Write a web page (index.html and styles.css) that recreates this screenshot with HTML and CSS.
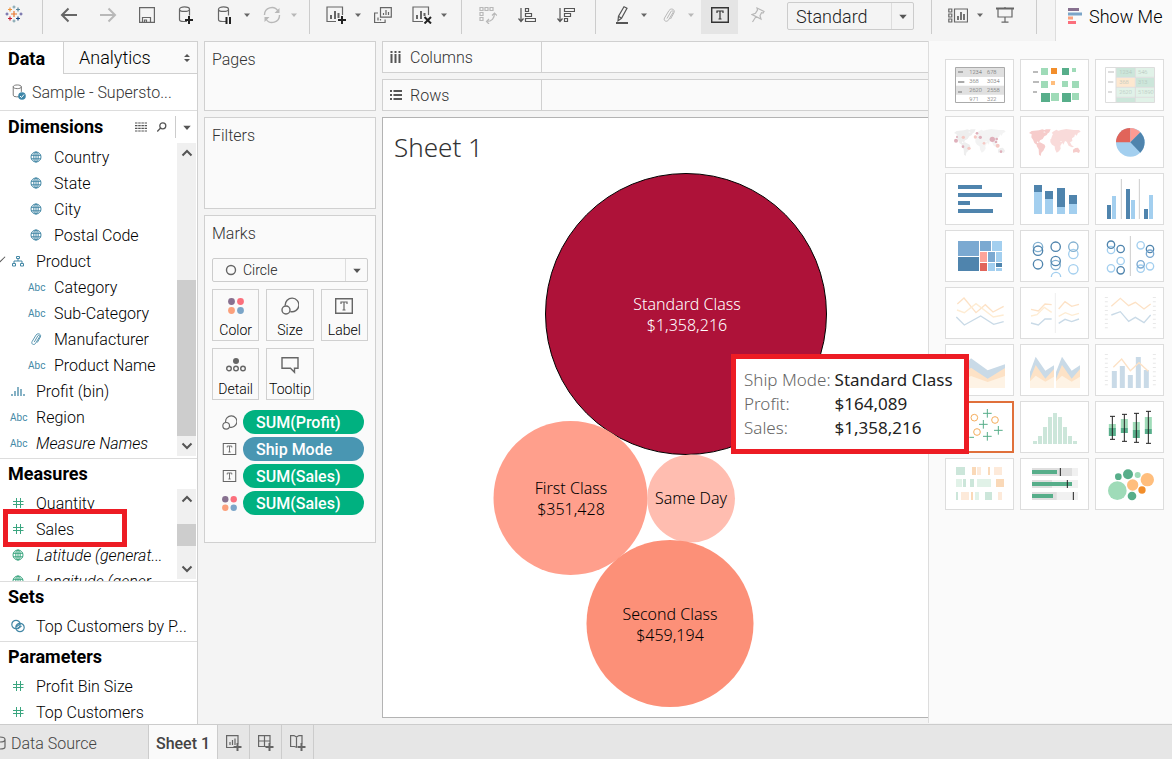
FILE: index.html
```html
<!DOCTYPE html>
<html lang="en">
<head>
<meta charset="utf-8">
<title>Sheet 1</title>
<link rel="stylesheet" href="styles.css">
</head>
<body>
<svg class="defs" aria-hidden="true">
<symbol id="globe" viewBox="0 0 12 12"><g fill="none" stroke="currentColor"><circle cx="6" cy="6" r="5"/><ellipse cx="6" cy="6" rx="2.2" ry="5"/><path d="M1 4.3h10M1 7.8h10M6 1v10"/></g></symbol>
<symbol id="hash" viewBox="0 0 12 12"><path d="M4.5 1v10M8.5 1v10M1 4.5h10.500M1 7.500h10.500" fill="none" stroke="currentColor"/></symbol>
<symbol id="clip" viewBox="0 0 14 16"><path d="M5 11.500l4-7c1-1.500 2.800-.5 2 1l-4.500 7.500c-1.500 2.500-5.500 1-4-2l4.500-7.500c2-3 6.500-1 5 2.200l-3.500 6.300" fill="none" stroke="currentColor"/></symbol>
<symbol id="tree" viewBox="0 0 12 12"><path d="M4.500 1.500h3v2h-3zM.5 8.500h3v2.500h-3zM8.500 8.500h3v2.500h-3zM6 3.500v2.500M2 8.500v-2.500h8v2.500" fill="none" stroke="currentColor"/></symbol>
<symbol id="bins" viewBox="0 0 14 12"><path d="M1 9v2M4 6v5M7 2v9M10 4v7M13 9v2" fill="none" stroke="currentColor" stroke-width="1.300"/></symbol>
<symbol id="caret" viewBox="0 0 6 4"><path d="M0 .5h6l-3 3.500z" fill="currentColor"/></symbol>
<symbol id="up" viewBox="0 0 12 8"><path d="M1.500 6.500l4.500-4.500 4.500 4.500" fill="none" stroke="#555" stroke-width="2"/></symbol>
<symbol id="down" viewBox="0 0 12 8"><path d="M1.500 1.500l4.500 4.500 4.500-4.500" fill="none" stroke="#555" stroke-width="2"/></symbol>
<symbol id="boxt" viewBox="0 0 18 16"><path d="M.7.7h16.600v14.600h-16.600z" fill="none" stroke="currentColor" stroke-width="1.400"/><path d="M6 6v-2h6v2M9 4v8M7.500 12h3" fill="none" stroke="currentColor" stroke-width="1.200"/></symbol>
<symbol id="size" viewBox="0 0 18 18"><g fill="none" stroke="currentColor" stroke-width="1.400"><path d="M4.300 8.500a6.800 6.800 0 1 1 5 6"/><circle cx="5" cy="13" r="4"/></g></symbol>
<symbol id="dots" viewBox="0 0 16 16"><circle cx="3.500" cy="3.500" r="3.400" fill="#87708f"/><circle cx="12.500" cy="3.500" r="3.400" fill="#fb6f7c"/><circle cx="3.500" cy="12.500" r="3.400" fill="#fba07c"/><circle cx="12.500" cy="12.500" r="3.400" fill="#7ba5c8"/></symbol>
<symbol id="cyl" viewBox="0 0 16 18"><path d="M9 15.500h-3.500q-4 0-4-2v-10.500M11.500 3v6.500M1.500 3.200c0-3 10-3 10 0s-10 3-10 0" fill="none" stroke="currentColor" stroke-width="1.200"/></symbol>
<symbol id="world" viewBox="0 0 201 150" fill="currentColor"><path d="M24 48l8-6 22-2 10-3 8 3-5 6 8 1 4 6-9 5-5 8-8 4-3 7-6-4 0 6 8 6-4 2-12-9-4-10-5-7 1-9zM67 41l8-4 14 0-4 9-8 6-4-6zM48 78l9-2 14 7 2 6-6 12-6 6-2 10-5-4-1-16-6-10z"/><path fill-opacity=".7" d="M93 57l3-6-4-3 4-4 10-6 6 3 8-2 16-3 22 3 16 0 5 5-8 4-4 8-5-4-2 7-7 5 1 8-7 4 5 9 7 4-6 2-10-5-6-12-5-2-5 11-6-11-7-1 4 6-6 3-5-8-7-4-6 0-5 2zM88 67l8-4 10 1 8 2 5 8 6 1-7 12 1 8-5 8-7 4-5-10-1-9-8-5-5-8z"/><path d="M156 98l7-5 8-1 6 9-3 7-8-3-10 2z"/></symbol>
</svg>

<div class="app">
<header class="toolbar">
<button class="logo" aria-label="Start page"><svg width="18" height="18" viewBox="0 0 18 18" fill="none" stroke-width="1.200"><path d="M9 6v6M6 9h6" stroke="#e8762d"/><path d="M5 2.500v4M3 4.500h4" stroke="#f0943a"/><path d="M13 2.500v4M11 4.500h4" stroke="#5b879b"/><path d="M5 11.500v4M3 13.500h4" stroke="#c72035"/><path d="M13 11.500v4M11 13.500h4" stroke="#1f457e"/><path d="M9 .5v3M7.500 2h3M9 14.500v3M7.500 16h3" stroke="#7099a6" stroke-width="1"/><path d="M2 7.500v3M.5 9h3M16 7.500v3M14.500 9h3" stroke="#59559a" stroke-width="1"/></svg></button>
<span class="sep"></span>
<button class="tool" aria-label="Undo"><svg width="18" height="16" fill="none" stroke="#666" stroke-width="2"><path d="M17 8h-15M8.500 1.500l-6.500 6.500 6.500 6.500"/></svg></button>
<button class="tool" aria-label="Redo"><svg width="18" height="16" fill="none" stroke="#b8b8b8" stroke-width="2"><path d="M1 8h15M9.500 1.500l6.500 6.500-6.500 6.500"/></svg></button>
<button class="tool" aria-label="Save"><svg width="16" height="16" fill="none" stroke="#666" stroke-width="1.200"><path d="M.6.6h14.800v14.800h-14.800zM3.500 15v-4.500h8v4.500M5.500 15v-2h2v2"/></svg></button>
<button class="tool" aria-label="New data source"><svg width="16" height="18"><use href="#cyl" width="16" height="18"/><path d="M11 10v8M7 14h8" stroke="#222" stroke-width="2"/></svg></button>
<button class="tool" aria-label="Pause updates"><svg width="16" height="18"><use href="#cyl" width="16" height="18"/><path d="M9.500 11v7M13 11v7" stroke="#222" stroke-width="2"/></svg></button>
<button class="drop" aria-label="Update options"><svg width="6" height="4"><use href="#caret"/></svg></button>
<button class="tool off" aria-label="Refresh"><svg width="18" height="18" fill="none" stroke="currentColor" stroke-width="1.400"><path d="M1.500 9a7.300 7.300 0 0 1 13.500-4M16.500 9a7.300 7.300 0 0 1-13.500 4"/><path d="M16.500 2v5h-5zM1.500 16v-5h5z" fill="currentColor" stroke="none"/></svg></button>
<button class="drop off" aria-label="Refresh options"><svg width="6" height="4"><use href="#caret"/></svg></button>
<span class="sep"></span>
<button class="tool" aria-label="New worksheet"><svg width="20" height="18" fill="none" stroke="#666" stroke-width="1.200"><path d="M10 15.500h-9v-14.500h15.500v8"/><path d="M5 9v4M9 5v8M12.500 7v5" stroke-width="2"/><path d="M16 10v8M12 14h8" stroke="#222" stroke-width="2"/></svg></button>
<button class="drop" aria-label="New sheet options"><svg width="6" height="4"><use href="#caret"/></svg></button>
<button class="tool" aria-label="Duplicate"><svg width="18" height="17" fill="none" stroke="#666" stroke-width="1.200"><path d="M6.500.6h10.800v9.500h-10.800zM4 6h-3.400v9.500h10.500v-3M9.500 6v2M12 3v5M14.500 5v3M4 10.500v3M6.500 12v1.500"/></svg></button>
<button class="tool" aria-label="Clear sheet"><svg width="20" height="18" fill="none" stroke="#666" stroke-width="1.200"><path d="M11 15.500h-10v-14.500h15.500v8"/><path d="M5 9v4M9 5v8M12.500 7v3" stroke-width="2"/><path d="M12.500 11l6.500 6.500M19 11l-6.500 6.500" stroke="#222" stroke-width="2"/></svg></button>
<button class="drop" aria-label="Clear options"><svg width="6" height="4"><use href="#caret"/></svg></button>
<span class="sep late"></span>
<button class="tool off" aria-label="Swap"><svg width="18" height="18" fill="none" stroke="currentColor" stroke-width="1.200"><path d="M1 1.500h3v3h-3zM6 1.500h3v3h-3zM11 1.500h3v3h-3zM1 6.500h3v3h-3zM1 11.500h3v3h-3zM15.500 7q0 8.500-8 8.500M13 9.500l2.500-2.500 2.500 2.500M10 13l-2.500 2.500 2.500 2.500"/></svg></button>
<button class="tool" aria-label="Sort ascending"><svg width="18" height="16" fill="none" stroke="#555" stroke-width="1.200"><path d="M3 1v13M.5 11.500l2.500 3 2.500-3M7.500 1.500h3v3h-3zM7.500 6.500h6v3h-6zM7.500 11.500h10v3h-10z"/></svg></button>
<button class="tool" aria-label="Sort descending"><svg width="18" height="16" fill="none" stroke="#555" stroke-width="1.200"><path d="M3 1v13M.5 11.500l2.500 3 2.500-3M7.500 1.500h10v3h-10zM7.500 6.500h6v3h-6zM7.500 11.500h3v3h-3z"/></svg></button>
<span class="sep"></span>
<button class="tool" aria-label="Highlight"><svg width="14" height="18" fill="none" stroke="#555" stroke-width="1.200"><path d="M9 .8l3 1.500-5.500 10-3.500 2.500.5-4.500zM3.500 10.300l3 2"/><path d="M1 17h12" stroke-width="2"/></svg></button>
<button class="drop" aria-label="Highlight options"><svg width="6" height="4"><use href="#caret"/></svg></button>
<button class="tool off" aria-label="Group members"><svg width="14" height="16"><use href="#clip"/></svg></button>
<button class="drop off" aria-label="Group options"><svg width="6" height="4"><use href="#caret"/></svg></button>
<button class="tool on" aria-label="Show mark labels"><svg width="18" height="16"><use href="#boxt"/></svg></button>
<button class="tool off" aria-label="Fix axes"><svg width="14" height="16" fill="none" stroke="currentColor" stroke-width="1.200"><path d="M6 1l7 3.500-1 1.500-1.500-.3-1.500 3 1 3.300-9-4.500 3.500-1.300 2-3zM5 9.500l-3.500 5.500"/></svg></button>
<label class="pick fit"><select aria-label="Fit"><option>Standard</option><option>Entire View</option></select><svg class="arrow" width="8" height="5"><use href="#caret"/></svg></label>
<span class="sep wide"></span>
<button class="tool" aria-label="Show/hide cards"><svg width="20" height="15" fill="none" stroke="#666" stroke-width="1.200"><path d="M.8 1h3v3h-3zM.8 6h3v3h-3zM.8 11h3v3h-3zM6.500 1h13v13h-13z"/><path d="M10 8v4M13 4v8M16 6v6" stroke-width="1.800"/></svg></button>
<button class="drop" aria-label="Card options"><svg width="6" height="4"><use href="#caret"/></svg></button>
<button class="tool" aria-label="Presentation mode"><svg width="18" height="16" fill="none" stroke="#666" stroke-width="1.200"><path d="M2 1.500v8.500h14v-8.500M9 0v2M9 10v5M5.500 15.200h7"/><path d="M0 1.500h18" stroke-width="2"/></svg></button>
<span class="sep late"></span>
<button class="showme-tab"><svg width="15" height="16"><path d="M0 1.500h11" stroke="#87708f" stroke-width="3"/><path d="M0 6h14" stroke="#7ba5c8" stroke-width="3"/><path d="M0 10h5" stroke="#fba07c" stroke-width="3"/><path d="M0 14.500h8" stroke="#fb6f7c" stroke-width="3"/></svg>Show Me</button>
</header>

<main class="main">
<aside class="side">
<div class="tabs"><button class="tab active">Data</button><button class="tab">Analytics<svg width="6" height="8"><path d="M0 3l3-3 3 3zM0 5l3 3 3-3z" fill="#555"/></svg></button></div>
<button class="source"><svg width="14" height="16" viewBox="0 0 14 16"><use href="#cyl" width="13" height="15" color="#777"/><circle cx="10" cy="12" r="3.800" fill="#3e86a8"/><path d="M8 12l1.500 1.500 2.500-3" fill="none" stroke="#fff"/></svg>Sample - Supersto...</button>
<section class="dims">
<div class="head"><h2>Dimensions</h2><button aria-label="View data"><svg width="12" height="10" stroke="#555" stroke-width="1.200"><path d="M0 1h12M0 3.700h12M0 6.300h12M0 9h12" stroke-dasharray="2.500 .7"/></svg></button><button aria-label="Find field"><svg width="10" height="10" fill="none" stroke="#555" stroke-width="1.300"><circle cx="5.800" cy="3.800" r="3"/><path d="M3.600 6l-3.300 3.500"/></svg></button><button class="more" aria-label="Dimension menu"><svg width="8" height="5"><use href="#caret"/></svg></button></div>
<div class="scroll">
<ul class="fields">
<li class="sub"><svg width="12" height="12"><use href="#globe"/></svg>Country</li>
<li class="sub"><svg width="12" height="12"><use href="#globe"/></svg>State</li>
<li class="sub"><svg width="12" height="12"><use href="#globe"/></svg>City</li>
<li class="sub"><svg width="12" height="12"><use href="#globe"/></svg>Postal Code</li>
<li class="open"><svg width="12" height="12"><use href="#tree"/></svg>Product</li>
<li class="sub"><b>Abc</b>Category</li>
<li class="sub"><b>Abc</b>Sub-Category</li>
<li class="sub"><svg width="12" height="14"><use href="#clip"/></svg>Manufacturer</li>
<li class="sub"><b>Abc</b>Product Name</li>
<li><svg width="14" height="12"><use href="#bins"/></svg>Profit (bin)</li>
<li><b>Abc</b>Region</li>
<li><b>Abc</b><i>Measure Names</i></li>
</ul>
<div class="bar"><button aria-label="Scroll up"><svg width="12" height="8"><use href="#up"/></svg></button><span class="track low"><span class="thumb"></span></span><button aria-label="Scroll down"><svg width="12" height="8"><use href="#down"/></svg></button></div>
</div>
</section>
<section class="measures">
<div class="head"><h2>Measures</h2></div>
<div class="scroll">
<ul class="fields green">
<li><svg width="12" height="12"><use href="#hash"/></svg>Quantity</li>
<li class="marked"><svg width="12" height="12"><use href="#hash"/></svg>Sales</li>
<li><svg width="12" height="12"><use href="#globe"/></svg><i>Latitude (generat...</i></li>
<li><svg width="12" height="12"><use href="#globe"/></svg><i>Longitude (gener...</i></li>
</ul>
<div class="bar"><button aria-label="Scroll up"><svg width="12" height="8"><use href="#up"/></svg></button><span class="track mid"><span class="thumb"></span></span><button aria-label="Scroll down"><svg width="12" height="8"><use href="#down"/></svg></button></div>
</div>
</section>
<section class="sets">
<div class="head"><h2>Sets</h2></div>
<ul class="fields"><li><svg width="14" height="14" fill="none" stroke="currentColor" stroke-width="1.200"><circle cx="5" cy="5.500" r="4.200"/><circle cx="9" cy="8.500" r="4.200"/><path d="M5 8l4-3M6.500 10l4-3"/></svg>Top Customers by P...</li></ul>
</section>
<section class="params">
<div class="head"><h2>Parameters</h2></div>
<ul class="fields green"><li><svg width="12" height="12"><use href="#hash"/></svg>Profit Bin Size</li><li><svg width="12" height="12"><use href="#hash"/></svg>Top Customers</li></ul>
</section>
</aside>

<div class="cards">
<section class="card pages"><h3>Pages</h3></section>
<section class="card filters"><h3>Filters</h3></section>
<section class="card marks"><h3>Marks</h3>
<label class="pick mark"><svg class="ring" width="12" height="12"><circle cx="6" cy="6" r="4.500" fill="none" stroke="#666" stroke-width="1.400"/></svg><select aria-label="Mark type"><option>Circle</option><option>Bar</option><option>Line</option></select><svg class="arrow" width="8" height="5"><use href="#caret"/></svg></label>
<div class="props">
<button><svg width="16" height="18"><use href="#dots"/></svg>Color</button>
<button><svg width="18" height="18"><use href="#size"/></svg>Size</button>
<button><svg width="18" height="18"><use href="#boxt"/></svg>Label</button>
<button><svg width="20" height="18" fill="none" stroke="#666" stroke-width="1.400"><circle cx="10" cy="5" r="3" fill="#666" stroke="none"/><circle cx="3" cy="12.500" r="2.300"/><circle cx="10" cy="12.500" r="2.300"/><circle cx="17" cy="12.500" r="2.300"/></svg>Detail</button>
<button><svg width="18" height="18" fill="none" stroke="#666" stroke-width="1.400"><path d="M1 1.700h16v10.500h-3.500v4l-4-4h-8.500z"/></svg>Tooltip</button>
</div>
<ul class="pills">
<li><svg width="15" height="15"><use href="#size"/></svg><button class="pill">SUM(Profit)</button></li>
<li><svg width="15" height="12"><use href="#boxt"/></svg><button class="pill blue">Ship Mode</button></li>
<li><svg width="15" height="12"><use href="#boxt"/></svg><button class="pill">SUM(Sales)</button></li>
<li><svg width="15" height="15"><use href="#dots"/></svg><button class="pill">SUM(Sales)</button></li>
</ul>
</section>
</div>

<div class="work">
<div class="shelf"><span><svg width="12" height="12" stroke="#555" stroke-width="2"><path d="M1.500 0v2M5.500 0v2M9.500 0v2M1.500 3v9M5.500 3v9M9.500 3v9"/></svg>Columns</span></div>
<div class="shelf"><span><svg width="12" height="12" stroke="#555" stroke-width="2"><path d="M0 2h2M0 6h2M0 10h2M3.500 2h9M3.500 6h9M3.500 10h9"/></svg>Rows</span></div>
<section class="viz">
<h1>Sheet 1</h1>
<svg class="bubbles" viewBox="383 168 545 549" role="img" aria-label="Sales by ship mode">
<circle cx="686" cy="314" r="140.500" fill="#ae1239" stroke="#000"/>
<circle cx="570.500" cy="498" r="77" fill="#ff9f8c"/>
<circle cx="691" cy="498.500" r="44" fill="#ffbdb0"/>
<circle cx="670" cy="623.500" r="83.500" fill="#fc9078"/>
<g class="light"><text x="687" y="310">Standard Class</text><text x="687" y="331">$1,358,216</text></g>
<text x="571" y="494">First Class</text><text x="571" y="515">$351,428</text>
<text x="691" y="504">Same Day</text>
<text x="670" y="620">Second Class</text><text x="670" y="641">$459,194</text>
</svg>
<dl class="tip"><dt>Ship Mode:</dt><dd>Standard Class</dd><dt>Profit:</dt><dd>$164,089</dd><dt>Sales:</dt><dd>$1,358,216</dd></dl>
</section>
</div>

<aside class="showme">
<button aria-label="Text table"><svg viewBox="48 30 201 150"><path d="M76 53h147v28h-147zM76 107h147v27h-147z" fill="#e0e0e0"/><path d="M76.500 52.500h147v105h-147z" fill="none" stroke="#aaa" stroke-width="3"/><path d="M84 66h15M84 96h19M84 126h12" stroke="#aaa" stroke-width="6"/><g class="tiny"><text x="118" y="73">1234</text><text x="171" y="73">678</text><text x="118" y="100">368</text><text x="171" y="100">3034</text><text x="118" y="127">2620</text><text x="171" y="127">2558</text><text x="118" y="152">971</text><text x="171" y="152">322</text></g></svg></button>
<button aria-label="Heat map"><svg viewBox="273 30 201 150"><path d="M309 66h15M309 96h18M309 126h12" stroke="#bbb" stroke-width="6"/><path d="M333 54h21v21h-21zM426 54h12v12h-12zM333 93h21v21h-21zM396 93h18v18h-18zM426 93h21v21h-21zM363 129h24v24h-24zM426 129h21v21h-21z" fill="#9fdbb8"/><path d="M396 54h21v21h-21zM333 129h27v27h-27zM396 129h27v27h-27z" fill="#57ae8a"/><path d="M363 54h18v18h-18z" fill="#f28e2b"/><path d="M363 93h12v12h-12z" fill="#ffbe7d"/></svg></button>
<button aria-label="Highlight table"><svg viewBox="498 30 201 150"><path d="M558 53h58v28h-58zM618 83h56v28h-56zM558 143h58v14h-58z" fill="#cce6da"/><path d="M618 53h56v28h-56zM558 113h116v28h-116zM618 143h56v14h-56z" fill="#e1f2e8"/><path d="M558 83h58v28h-58z" fill="#fde8d0"/><path d="M526.500 52.500h147v105h-147zM558 53v105M616 53v105M558 82h115M558 112h115M558 142h115" fill="none" stroke="#ddd" stroke-width="3"/><path d="M534 66h18M534 96h16M534 126h12" stroke="#ddd" stroke-width="6"/><g class="tiny pale"><text x="568" y="73">1234</text><text x="624" y="73">546</text><text x="568" y="103">368</text><text x="624" y="103">313</text><text x="568" y="133">2620</text><text x="624" y="133">51890</text></g></svg></button>
<button aria-label="Symbol map"><svg viewBox="0 0 201 150"><use href="#world" color="#eee"/><g fill="#f5c9c4"><circle cx="52" cy="61" r="5"/><circle cx="69" cy="94" r="5"/><circle cx="88" cy="60" r="5"/><circle cx="155" cy="86" r="6"/><circle cx="114" cy="79" r="4"/></g><g fill="#dfb0bb"><circle cx="30" cy="71" r="6"/><circle cx="33" cy="60" r="3"/><circle cx="93" cy="49" r="4"/><circle cx="103" cy="61" r="5"/><circle cx="139" cy="67" r="8"/><circle cx="152" cy="66" r="4"/><circle cx="150" cy="75" r="4"/><circle cx="51" cy="89" r="4"/><circle cx="165" cy="104" r="4"/></g></svg></button>
<button aria-label="Filled map"><svg viewBox="0 0 201 150"><use href="#world" color="#f6cccb"/></svg></button>
<button aria-label="Pie chart"><svg viewBox="498 201 201 150"><circle cx="601" cy="277" r="43" fill="#a3cfef"/><path d="M601 277v-43a43 43 0 0 0-43 43z" fill="#e1645a"/><path d="M601 277v-43a43 43 0 0 1 30 13z" fill="#fd9b93"/><path d="M601 277l30-30a43 43 0 0 1 0 61z" fill="#4f84ad"/></svg></button>
<button aria-label="Horizontal bars"><svg viewBox="48 372 201 150"><path d="M84 411h72M84 435h132M84 459h36M84 483h105" stroke="#4f84ad" stroke-width="12"/></svg></button>
<button aria-label="Stacked bars"><svg viewBox="273 372 201 150" stroke-width="24"><path d="M324 492v-67M357 492v-46M393 492v-22M429 492v-31" stroke="#a3cfef"/><path d="M324 426v-21M357 447v-24M393 471v-57M429 462v-27" stroke="#4f84ad"/></svg></button>
<button aria-label="Side-by-side bars"><svg viewBox="498 372 201 150" stroke-width="12"><path d="M537 507v-42M594 507v-90M648 507v-30" stroke="#4f84ad"/><path d="M552 507v-69M609 507v-57M663 507v-72" stroke="#a3cfef"/><path d="M574 387v120M628 387v120" stroke="#ccc" stroke-width="3"/></svg></button>
<button aria-label="Treemap"><svg viewBox="48 543 201 150"><path d="M84 573h63v45h-63zM150 573h33v30h-33zM174 606h21v30h-21z" fill="#7ba9d1"/><path d="M84 621h63v42h-63zM198 639h18v12h-18z" fill="#4f84ad"/><path d="M186 573h30v30h-30zM198 606h18v30h-18zM174 639h21v24h-21zM198 654h18v9h-18z" fill="#a3cfef"/><path d="M150 606h21v30h-21z" fill="#fda49a"/><path d="M150 639h21v24h-21z" fill="#e1645a"/></svg></button>
<button aria-label="Circle views"><svg viewBox="273 543 201 150" fill="none" stroke-width="4"><g stroke="#a3cfef"><circle cx="430" cy="612" r="14"/><circle cx="430" cy="658" r="14"/><path d="M364 681a14 14 0 0 1 28 0"/></g><g stroke="#83b1d1"><circle cx="324" cy="591" r="14"/><circle cx="377" cy="645" r="14"/><circle cx="430" cy="590" r="14"/></g><g stroke="#4f84ad"><circle cx="324" cy="602" r="14"/><circle cx="324" cy="643" r="14"/><circle cx="377" cy="590" r="14"/><circle cx="377" cy="633" r="14"/></g></svg></button>
<button aria-label="Side-by-side circles"><svg viewBox="498 543 201 150" fill="none" stroke-width="4"><path d="M601 558v120" stroke="#ccc" stroke-width="3"/><g stroke="#a3cfef"><circle cx="543" cy="600" r="11"/><circle cx="543" cy="655" r="11"/><circle cx="572" cy="633" r="11"/><circle cx="632" cy="586" r="11"/><circle cx="660" cy="649" r="11"/><circle cx="632" cy="656" r="11"/></g><g stroke="#4f84ad"><circle cx="543" cy="584" r="11"/><circle cx="572" cy="597" r="11"/><circle cx="572" cy="661" r="11"/><circle cx="660" cy="597" r="11"/></g><g stroke="#7ba9d1"><circle cx="660" cy="611" r="11"/><circle cx="632" cy="643" r="11"/></g></svg></button>
<button aria-label="Lines, continuous"><svg viewBox="48 24 201 150" fill="none" stroke-width="4"><path d="M82 72l20-18 36 44 28-24 23 22 32-17" stroke="#fde2c6"/><path d="M81 90l22 8 35-27 52 40 31-6" stroke="#feecd3"/><path d="M79 111l24 24 49-27 39 25 30-8" stroke="#c9dae7"/></svg></button>
<button aria-label="Lines, discrete"><svg viewBox="273 24 201 150" fill="none" stroke-width="4"><path d="M303 88l22 5 20-21 20 2M386 87l19-22 20 14 22-6" stroke="#fde2c6"/><path d="M303 108l18-4 22-22 22 15M386 109l20-11 20 8 21-6" stroke="#feecd3"/><path d="M303 129l22 6 20-18h20M386 130l19-12 20 7 22-8" stroke="#c9dae7"/><path d="M376 39v120" stroke="#eee" stroke-width="3"/></svg></button>
<button aria-label="Dual lines"><svg viewBox="498 24 201 150" fill="none" stroke-width="4"><path d="M544 79l27-24 25 22 20-10 26 20 20-15" stroke="#fde2c6"/><path d="M544 105l27-10 25 29 20-12 26 16 20-23" stroke="#c9dae7"/><path d="M529 51v98M673 51v98" stroke="#e8e8e8" stroke-width="9" stroke-dasharray="3 10"/></svg></button>
<button aria-label="Area chart, continuous"><svg viewBox="48 195 201 150"><path d="M78 285l45-50 50 36 52-18v71h-147z" fill="#c9dae7"/><path d="M78 297l45-34 50 33 52-32v60h-147z" fill="#fde2c6"/><path d="M78 310l45-22 50 18 52-18v36h-147z" fill="#fef3e5"/></svg></button>
<button aria-label="Area chart, discrete"><svg viewBox="273 195 201 150"><path d="M300 276l17-46 29 42 26-16v68h-72zM378 276l18-46 29 42 25-16v68h-72z" fill="#c9dae7"/><path d="M300 297l17-42 29 41 26-29v57h-72zM378 297l18-42 29 41 25-29v57h-72z" fill="#fde2c6"/><path d="M300 304l17-17 29 18 26-15v34h-72zM378 304l18-17 29 18 25-15v34h-72z" fill="#fef3e5"/></svg></button>
<button aria-label="Dual combination"><svg viewBox="498 195 201 150"><path d="M553 324v-51M577 324v-66M601 324v-39M625 324v-93M649 324v-54" stroke="#c9dae7" stroke-width="15"/><path d="M550 262l25-25 26 35 26-24 28 26" fill="none" stroke="#fde2c6" stroke-width="4"/><path d="M529 222v98M673 222v98" stroke="#e8e8e8" stroke-width="9" stroke-dasharray="3 10"/></svg></button>
<button class="chosen" aria-label="Scatter plot"><svg viewBox="48 366 201 150" fill="none" stroke-width="3"><g stroke="#f5ad5c"><circle cx="133" cy="413" r="10"/><circle cx="195" cy="420" r="10"/><circle cx="141" cy="456" r="10"/></g><path d="M172 387v26M159 400h26M160 420v26M147 433h26M205 438v26M192 451h26M172 456v26M159 469h26M118 472h14" stroke="#57ae8a"/></svg></button>
<button aria-label="Histogram"><svg viewBox="273 366 201 150"><path d="M315 492v-9M330 492v-24M345 492v-51M360 492v-81M375 492v-93M390 492v-81M405 492v-51M420 492v-24M435 492v-9" stroke="#cce6da" stroke-width="12"/></svg></button>
<button aria-label="Box-and-whisker plot"><svg viewBox="498 366 201 150"><path d="M547 432v14M583 417v28M619 426v25M655 411v36" stroke="#9fdbb8" stroke-width="21"/><path d="M547 444v24M583 444v15M619 450v24M655 447v15" stroke="#57ae8a" stroke-width="21"/><path d="M547 409v69M540 409h15M540 478h15M583 403v81M576 403h15M576 484h15M619 400v87M612 400h15M612 487h15M655 394v96M648 394h15M648 490h15" stroke="#222" stroke-width="3"/></svg></button>
<button aria-label="Gantt view"><svg viewBox="48 537 201 150" stroke-width="24"><path d="M78 573h27M78 648h6M120 609h12M99 609h9M165 648h21" stroke="#cce6da"/><path d="M78 609h18M141 609h42M135 648h12" stroke="#e1f2e8"/><path d="M141 573h12M192 573h24M93 648h24M204 648h12" stroke="#fdeada"/><path d="M126 573h12M174 573h6M198 609h24M123 648h6" stroke="#fad9b8"/></svg></button>
<button aria-label="Bullet graph"><svg viewBox="273 537 201 150"><path d="M306 576h138M306 612h138M306 648h138" stroke="#f1f1f1" stroke-width="24"/><path d="M306 576h120M306 612h60M306 648h74" stroke="#dfdfdf" stroke-width="24"/><path d="M306 576h75M306 612h120M306 648h63" stroke="#57ae8a" stroke-width="12"/><path d="M391 564v24M412 600v24M430 636v24" stroke="#222" stroke-width="3"/></svg></button>
<button aria-label="Packed bubbles"><svg viewBox="498 537 201 150"><g fill="#57ae8a"><circle cx="565" cy="590" r="10"/><circle cx="594" cy="583" r="15"/><circle cx="606" cy="648" r="13"/></g><g fill="#9fdbb8"><circle cx="562" cy="632" r="28"/><circle cx="623" cy="585" r="9"/></g><g fill="#ffbe7d"><circle cx="652" cy="599" r="20"/><circle cx="608" cy="615" r="17"/></g><circle cx="636" cy="630" r="11" fill="#f28e2b"/></svg></button>
</aside>
</main>

<footer class="sheets">
<button class="ds"><svg width="6" height="14" fill="none" stroke="#666" stroke-width="1.200"><path d="M0 1q5 0 5 2.500v7.500q0 2-5 2M5 3.500q0 2.500-5 2.500"/></svg>Data Source</button>
<button class="current">Sheet 1</button>
<button class="new" aria-label="New worksheet"><svg width="16" height="16" fill="none" stroke="#666" stroke-width="1.200"><path d="M8 12.500h-7.400v-11.900h11.400v8M4 7v3M6.500 5v5M9 3.500v6.500"/><path d="M11.500 8v8M7.500 12h8" stroke-width="2"/></svg></button>
<button class="new" aria-label="New dashboard"><svg width="16" height="16" fill="none" stroke="#666" stroke-width="1.200"><path d="M8 11.500h-7.400v-10.900h11.400v8M6.500.6v11M.6 6h11.400"/><path d="M11.500 8v8M7.500 12h8" stroke-width="2"/></svg></button>
<button class="new" aria-label="New story"><svg width="16" height="16" fill="none" stroke="#666" stroke-width="1.200"><path d="M7 12.500l-2.500-1h-3.900v-10.900h3.400l2.500 1.500 2.500-1.500h3v8M6.500 2v10"/><path d="M11.500 8v8M7.500 12h8" stroke-width="2"/></svg></button>
</footer>
</div>
</body>
</html>
```
FILE: styles.css
```css
*,*::before,*::after{box-sizing:border-box;}
body{
margin:0;
background:#f4f4f4;
color:#222;
font-family:Roboto,"Liberation Sans",sans-serif;
font-size:16px;
font-weight:300;}
button{
margin:0;
padding:0;
border:0;
background:none;
color:inherit;
font:inherit;}
ul,dl,dd,h1,h2,h3{
margin:0;
padding:0;
list-style:none;}
svg{flex-shrink:0;}
.defs{
position:absolute;
width:0;
height:0;}
.app{
display:flex;
flex-direction:column;
height:100vh;
overflow:hidden;}

/* toolbar */
.toolbar{
display:flex;
align-items:flex-start;
height:41px;
flex-shrink:0;}
.logo{
width:32px;
height:30px;
padding:2px 4px 0 0;
text-align:center;}
.sep{
width:1px;
height:34px;
margin:0 6px 0 10px;
background:#ccc;}
.sep.wide{margin-left:17px;}
.sep.late{margin-left:12px;}
.tool,.drop{
display:flex;
align-items:center;
justify-content:center;
width:39px;
height:34px;
padding-bottom:4px;
color:#666;}
.drop{
width:10px;
margin-left:-2px;}
.off{color:#b8b8b8;}
.on{
width:37px;
margin-left:5px;
background:#e5e5e5;
color:#333;}
.pick{
position:relative;
display:block;
color:#555;}
.pick select{
width:100%;
height:100%;
padding:0 8px;
border:1px solid #ccc;
border-radius:2px;
appearance:none;
background:#fafafa;
color:#222;
font:inherit;}
.pick .arrow{
position:absolute;
right:7px;
top:50%;
margin-top:-2px;
pointer-events:none;}
.pick::after{
content:"";
position:absolute;
right:22px;
top:1px;
bottom:1px;
border-left:1px solid #ddd;}
.pick .ring{
position:absolute;
left:13px;
top:6px;}
.fit{
width:127px;
height:28px;
margin:2px 0 0 10px;
font-size:18px;}
.fit select{background:#f4f4f4;}
.showme-tab{
display:flex;
flex:1;
align-items:center;
gap:6px;
height:41px;
margin-left:12px;
padding:0 0 9px 12px;
border-left:1px solid #ddd;
background:#fafafa;
color:#000;
font-size:18px;
white-space:nowrap;}

/* data pane */
.main{
display:flex;
flex:1;
min-height:0;}
.side{
display:flex;
flex-direction:column;
width:198px;
border:1px solid #d0d0d0;
border-width:1px 1px 0 0;
background:#fff;
overflow:hidden;}
.side section{border-top:1px solid #ddd;}
.tabs{
display:flex;
height:32px;
flex-shrink:0;
font-size:18px;}
.tab{
display:flex;
flex:1;
align-items:center;
justify-content:space-between;
padding:0 7px 0 15px;
border:1px solid #d0d0d0;
border-width:0 0 1px 1px;
background:#fafafa;
color:#000;}
.tab.active{
flex:none;
width:63px;
padding:0 8px;
border:0;
background:#fff;
font-weight:bold;}
.source{
display:flex;
align-items:center;
gap:6px;
height:36px;
flex-shrink:0;
padding-left:12px;
color:#333;}
.head{
display:flex;
align-items:center;
gap:10px;
height:30px;
padding-left:8px;}
.head h2{
flex:1;
color:#000;
font-size:18px;
line-height:20px;}
.dims .head{height:32px;}
.head button{
display:flex;
align-items:center;
justify-content:center;}
.head .more{
width:22px;
height:22px;
margin-left:-2px;
border-left:1px solid #ccc;
color:#555;}
.scroll{
display:flex;
height:315px;
overflow:hidden;}
.measures .scroll{height:92px;}
.fields{
flex:1;
min-width:0;
padding-top:1px;
white-space:nowrap;}
.fields li{
position:relative;
display:flex;
align-items:center;
height:26px;
padding-left:11px;
color:#000;}
.fields svg{
width:14px;
margin-right:11px;
color:#4488a6;}
.fields.green svg{color:#3aa57f;}
.fields b{
width:26px;
margin-left:-1px;
color:#4488a6;
font-size:10px;}
.fields .sub{padding-left:29px;}
.sets .fields{padding-bottom:2px;}
.open::before{
content:"";
position:absolute;
left:-4px;
top:8px;
width:9px;
height:5px;
border:1px solid #555;
border-width:0 0 1px 1px;
transform:rotate(-45deg);}
.marked::after{
content:"";
position:absolute;
left:3px;
top:-7px;
z-index:2;
width:124px;
height:38px;
border:5px solid #ed1c24;}
.bar{
display:flex;
flex-direction:column;
width:20px;
margin-bottom:2px;
border-right:1px solid #fff;
background:#f0f0f0;}
.bar button{
display:flex;
align-items:center;
justify-content:center;
height:20px;}
.track{
display:flex;
flex-direction:column;
flex:1;}
.thumb{
background:#cdcdcd;
height:57%;}
.low{justify-content:flex-end;}
.mid{justify-content:center;}
.mid .thumb{
height:22px;
margin-top:2px;}
.params{flex:1;}

/* cards */
.cards{
display:flex;
flex-direction:column;
gap:6px;
width:172px;
margin:0 6px;}
.card{
padding:8px 7px;
border:1px solid #d0d0d0;
background:#fafafa;}
.card h3{
color:#333;
font-size:16px;
font-weight:300;
line-height:20px;}
.pages{height:70px;}
.filters{height:92px;}
.marks{height:328px;}
.mark{
height:24px;
margin:14px 0 7px;
font-size:14px;}
.mark select{padding-left:30px;}
.props{
display:grid;
grid-template-columns:repeat(3,1fr);
gap:7px;}
.props button{
display:flex;
flex-direction:column;
align-items:center;
gap:7px;
height:52px;
padding-top:7px;
border:1px solid #d0d0d0;
color:#000;
font-size:14px;
line-height:16px;}
.props svg{color:#666;}
.pills{
display:flex;
flex-direction:column;
gap:3px;
padding:10px 4px 0 10px;
color:#666;}
.pills li{
display:flex;
align-items:center;
gap:6px;}
.pill{
flex:1;
height:24px;
padding-left:13px;
border-radius:12px;
background:#00b180;
color:#fff;
font-weight:500;
text-align:left;}
.pill.blue{background:#4996b2;}

/* sheet */
.work{
display:flex;
flex:1;
flex-direction:column;
gap:6px;
min-width:0;
padding-bottom:6px;}
.shelf{
height:32px;
border:1px solid #d0d0d0;
border-right:0;
background:#fafafa;}
.shelf span{
display:flex;
align-items:center;
gap:8px;
width:159px;
height:30px;
padding-left:7px;
border-right:1px solid #d0d0d0;
color:#333;}
.viz{
position:relative;
display:flex;
flex:1;
flex-direction:column;
min-height:0;
border:1px solid #b3b3b3;
border-right:0;
background:#fff;
font-family:"Noto Sans","Open Sans",sans-serif;}
.viz h1{
height:50px;
padding:9px 11px 0;
color:#333;
font-size:26px;
font-weight:300;
line-height:40px;}
.bubbles{
flex:1;
width:100%;
min-height:0;
fill:#000;
font-size:16px;
text-anchor:middle;}
.light{fill:#fff;}
.tip{
position:absolute;
left:348px;
top:236px;
z-index:3;
display:grid;
grid-template-columns:auto auto;
column-gap:4px;
padding:9px 11px 9px 8px;
border:5px solid #ed1c24;
background:#fff;
color:#222;
font-size:17px;
font-weight:400;
line-height:24px;
white-space:nowrap;}
.tip dt{
color:#666;
font-weight:300;}

/* show me */
.showme{
display:grid;
grid-template-columns:repeat(3,69px);
grid-auto-rows:52px;
gap:5px 6px;
align-content:start;
width:244px;
margin-bottom:1px;
padding:18px 0 0 16px;
border-left:1px solid #ddd;
background:#fafafa;}
.showme button{
border:1px solid #ddd;
background:#fff;}
.showme svg{
display:block;
width:67px;
height:50px;}
.showme .chosen{
outline:1px solid #e0703a;
outline-offset:-2px;
border-color:#e0703a;}
.tiny{
fill:#666;
font-size:17px;}
.pale{fill:#b5c5bc;}

/* sheet tabs */
.sheets{
display:flex;
height:35px;
flex-shrink:0;
border-top:1px solid #ccc;
background:#e6e6e6;
color:#444;}
.sheets button{
display:flex;
align-items:center;
justify-content:center;
padding-top:2px;
border-right:1px solid #ccc;}
.sheets .ds{
justify-content:flex-start;
gap:5px;
width:149px;}
.sheets .current{
width:69px;
background:#fafafa;
color:#444;
font-weight:500;}
.sheets .new{width:32px;}
```
